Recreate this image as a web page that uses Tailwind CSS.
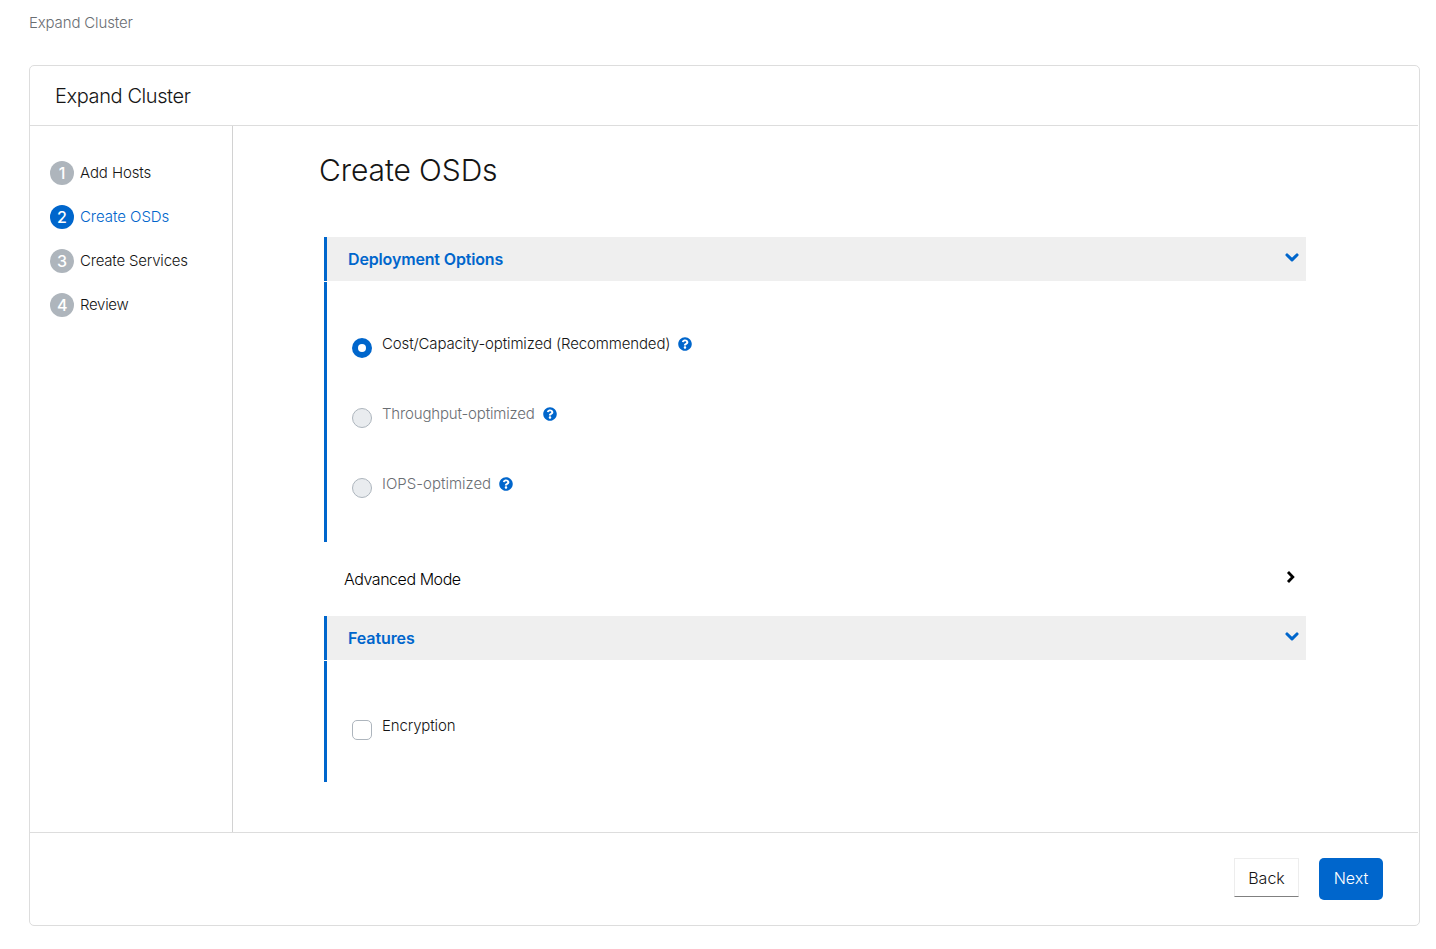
<!DOCTYPE html>
<html lang="en">
<head>
<meta charset="utf-8">
<title>Expand Cluster</title>
<script src="https://cdn.jsdelivr.net/npm/@tailwindcss/browser@4"></script>
</head>
<body class="h-[949px] overflow-hidden bg-white pl-[29px] pr-4 font-['Inter',sans-serif] text-[15px] font-light text-[#151515]">
<svg class="hidden">
  <symbol id="chev-down" viewBox="0 0 14 9"><path d="M2 2l5 4.8L12 2" fill="none" stroke="currentColor" stroke-width="3.1" stroke-linejoin="round" stroke-linecap="round"/></symbol>
  <symbol id="help" viewBox="0 0 512 512"><path fill="currentColor" d="M504 256c0 136.997-111.043 248-248 248S8 392.997 8 256C8 119.083 119.043 8 256 8s248 111.083 248 248zM262.655 90c-54.497 0-89.255 22.957-116.549 63.758-3.536 5.286-2.353 12.415 2.715 16.258l34.699 26.31c5.205 3.947 12.621 3.008 16.665-2.122 17.864-22.658 30.113-35.797 57.303-35.797 20.429 0 45.698 13.148 45.698 32.958 0 14.976-12.363 22.667-32.534 33.976C247.128 238.528 216 254.941 216 296v4c0 6.627 5.373 12 12 12h56c6.627 0 12-5.373 12-12v-1.333c0-28.462 83.186-29.647 83.186-106.667 0-58.002-60.165-102-116.531-102zM256 338c-25.365 0-46 20.635-46 46 0 25.364 20.635 46 46 46s46-20.636 46-46c0-25.365-20.635-46-46-46z"/></symbol>
</svg>
<nav class="h-[65px] pt-[11px] leading-6 tracking-[-0.15px] text-[#6a6e73]">Expand Cluster</nav>
<main class="flex h-[861px] w-[1391px] flex-col rounded-[5px] border border-[#dddddd]">
  <header class="mr-px flex h-[60px] items-center border-b border-[#dddddd] pl-[25px] text-xl tracking-[-0.4px]">Expand Cluster</header>
  <div class="flex h-[706px]">
    <ol class="flex w-[203px] flex-col gap-5 border-r border-[#d2d2d2] pl-5 pt-[35px]">
      <li class="flex h-6 items-center gap-1.5 tracking-[-0.1px]"><span class="flex size-6 items-center justify-center rounded-full bg-[#aeb5bc] text-base font-medium text-white">1</span>Add Hosts</li>
      <li class="flex h-6 items-center gap-1.5 tracking-[-0.05px] text-[#0066cc]"><span class="flex size-6 items-center justify-center rounded-full bg-[#0066cc] text-base font-medium text-white">2</span>Create OSDs</li>
      <li class="flex h-6 items-center gap-1.5 tracking-[-0.2px]"><span class="flex size-6 items-center justify-center rounded-full bg-[#aeb5bc] text-base font-medium text-white">3</span>Create Services</li>
      <li class="flex h-6 items-center gap-1.5 tracking-[-0.3px]"><span class="flex size-6 items-center justify-center rounded-full bg-[#aeb5bc] text-base font-medium text-white">4</span>Review</li>
    </ol>
    <div class="w-[1073px] pl-[86px] pt-6">
      <h1 class="text-[30px] leading-10 tracking-[-0.1px]">Create OSDs</h1>
      <div class="ml-[5px] mt-[47px] w-[982px]">
        <section>
          <button class="flex h-11 w-full items-center justify-between border-l-[3px] border-[#0066cc] bg-[#efefef] pl-[21px] pr-[7px] text-base font-semibold tracking-[-0.15px] text-[#0066cc]">Deployment Options<svg class="-mt-1 h-[9px] w-3.5"><use href="#chev-down"/></svg></button>
          <div class="mt-px flex h-[260px] flex-col gap-[46px] border-l-[3px] border-[#0066cc] pl-[25px] pt-[50px]">
            <label class="flex h-6 items-start tracking-[-0.14px]"><span class="mt-1.5 flex size-5 items-center justify-center rounded-full bg-[#0066cc]"><span class="size-2 rounded-full bg-white"></span></span><span class="ml-2.5 leading-6">Cost/Capacity-optimized (Recommended)</span><svg class="ml-2 mt-[5px] size-3.5 text-[#0066cc]"><use href="#help"/></svg></label>
            <label class="flex h-6 items-start tracking-[-0.17px] text-[#6a6e73]"><span class="mt-1.5 size-5 rounded-full border border-[#adb5bd] bg-[#e9ecef]"></span><span class="ml-2.5 leading-6">Throughput-optimized</span><svg class="ml-2 mt-[5px] size-3.5 text-[#0066cc]"><use href="#help"/></svg></label>
            <label class="flex h-6 items-start text-[#6a6e73]"><span class="mt-1.5 size-5 rounded-full border border-[#adb5bd] bg-[#e9ecef]"></span><span class="ml-2.5 leading-6">IOPS-optimized</span><svg class="ml-2 mt-[5px] size-3.5 text-[#0066cc]"><use href="#help"/></svg></label>
          </div>
        </section>
        <button class="flex h-[74px] w-full items-center justify-between pl-5 pr-[11px] text-base font-light tracking-[-0.45px] text-black">Advanced Mode<svg class="-mt-1 h-3.5 w-[9px]" viewBox="0 0 9 14"><path d="M2 2l4.8 5L2 12" fill="none" stroke="currentColor" stroke-width="2.8"/></svg></button>
        <section>
          <button class="flex h-11 w-full items-center justify-between border-l-[3px] border-[#0066cc] bg-[#efefef] pl-[21px] pr-[7px] text-base font-semibold tracking-[-0.1px] text-[#0066cc]">Features<svg class="-mt-1 h-[9px] w-3.5"><use href="#chev-down"/></svg></button>
          <div class="mt-px h-[121px] border-l-[3px] border-[#0066cc] pl-[25px] pt-[53px]">
            <label class="flex items-start tracking-[-0.15px]"><span class="mt-1.5 size-5 rounded-[5px] border border-[#adb5bd]"></span><span class="ml-2.5 leading-6">Encryption</span></label>
          </div>
        </section>
      </div>
    </div>
  </div>
  <footer class="mr-px flex grow items-start justify-end gap-5 border-t border-[#dddddd] pr-[35px] pt-[25px] text-base font-light">
    <button class="h-[39px] w-[65px] border border-[#ededed] border-b-[#808080] text-[#151515]">Back</button>
    <button class="h-[42px] w-16 rounded-[5px] bg-[#0066cc] pb-[3px] text-white">Next</button>
  </footer>
</main>
</body>
</html>
